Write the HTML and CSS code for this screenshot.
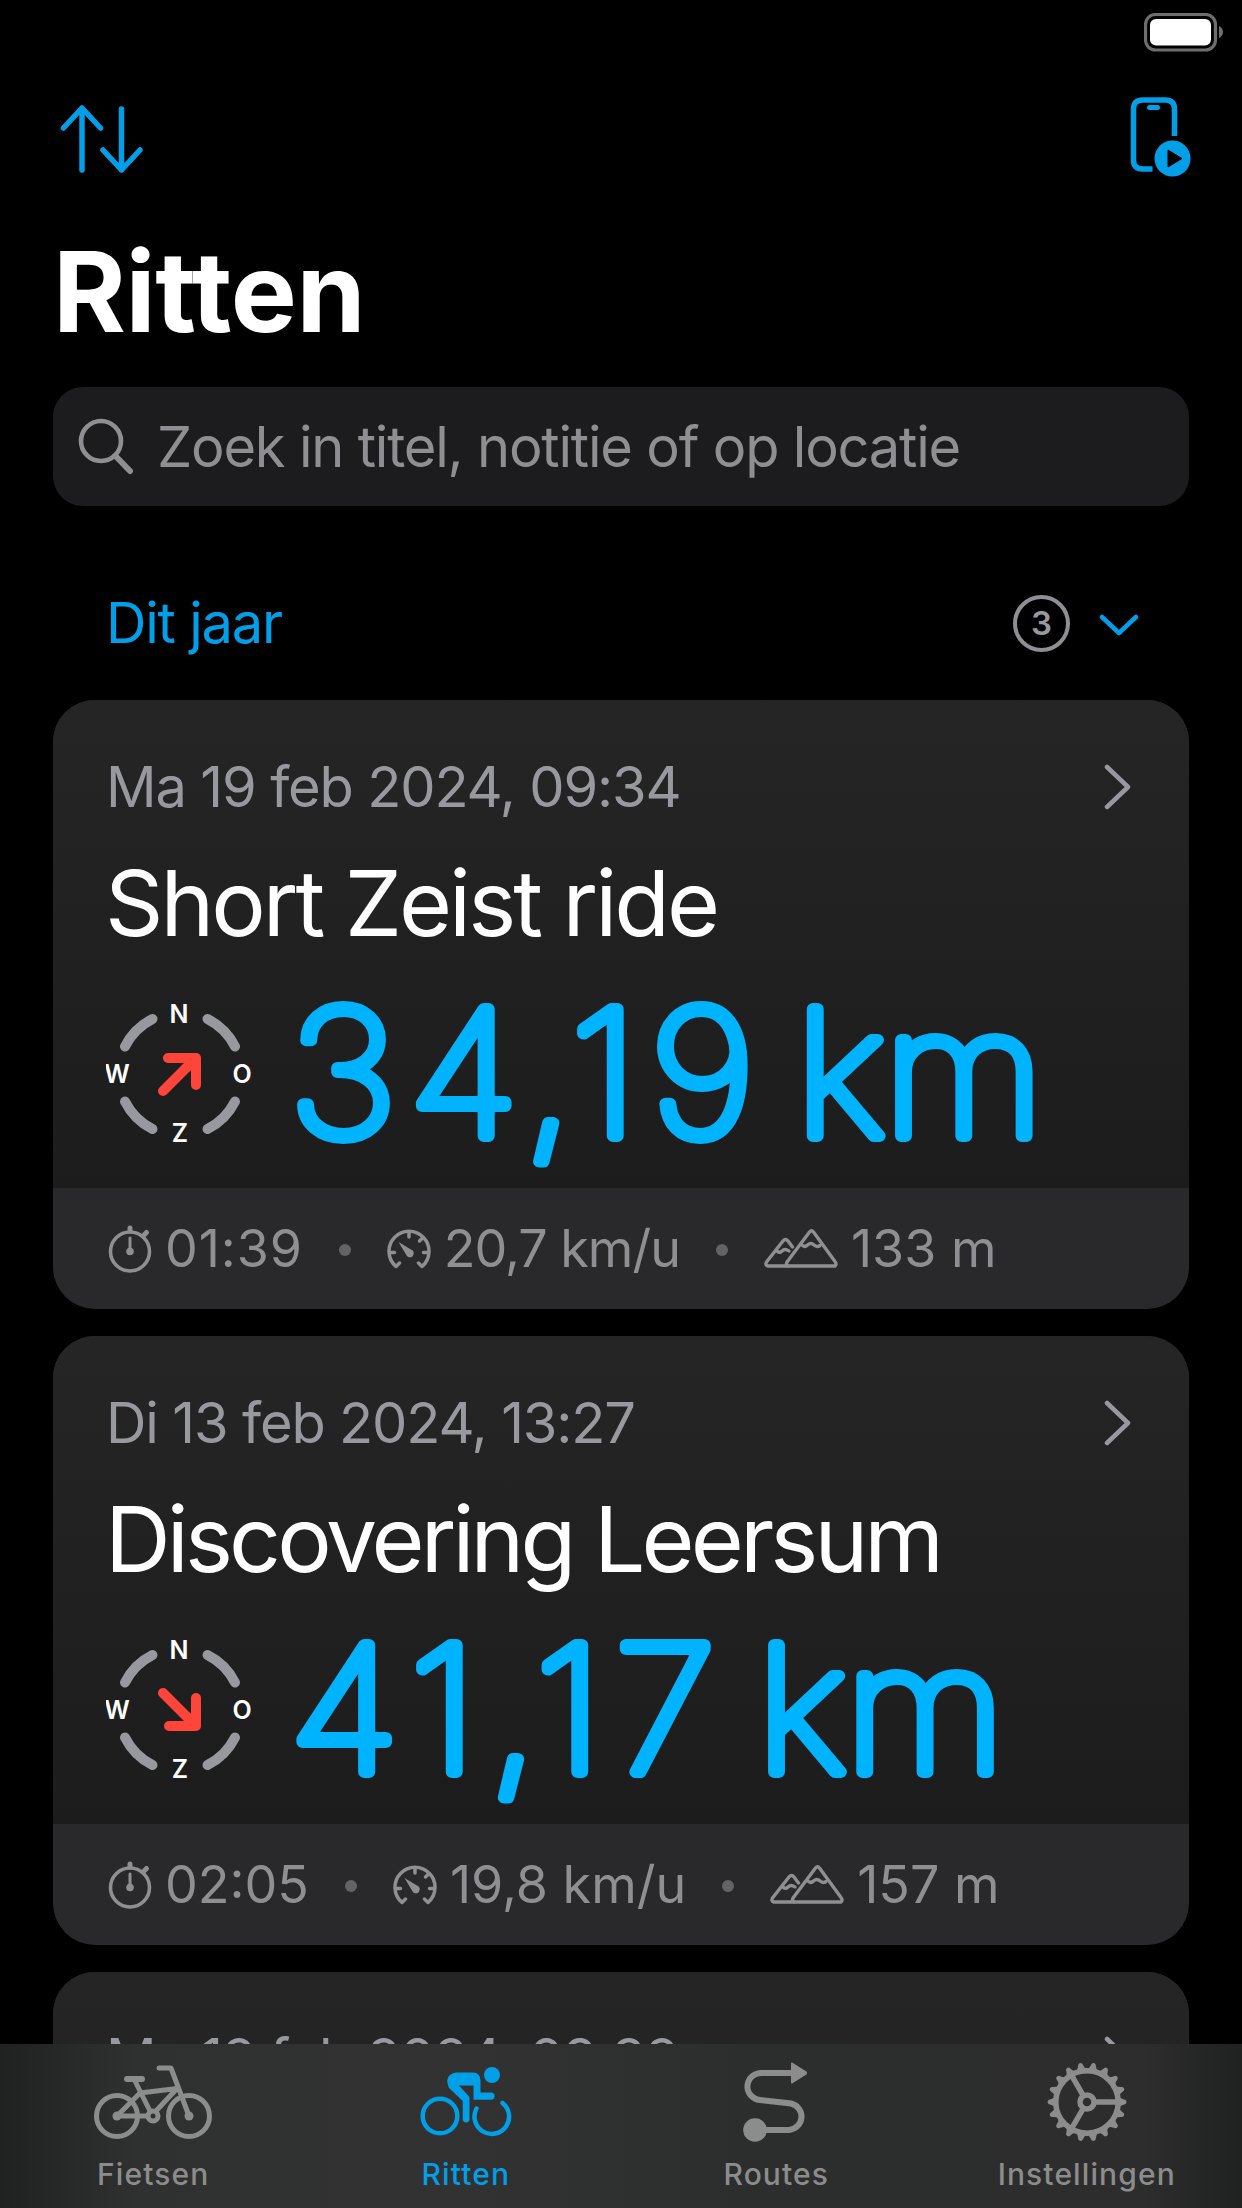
FILE: index.html
```html
<!DOCTYPE html>
<html lang="nl">
<head>
  <meta charset="UTF-8">
  <title>Ritten</title>
  <link rel="stylesheet" href="styles.css">
</head>

<body>

<!-- shared icons -->
<svg class="sprite" width="0" height="0">
  <symbol id="chevron" viewBox="0 0 28 48">
    <path d="M3 4 L24 24 L3 44" fill="none" stroke="currentColor" stroke-width="4.500" stroke-linecap="round" stroke-linejoin="round"/>
  </symbol>
  <symbol id="compass" viewBox="0 0 148 148">
    <g fill="none" stroke="#98989f" stroke-width="10" stroke-linecap="round">
      <path d="M19 46.500 A61.500 61.500 0 0 1 46.500 19"/>
      <path d="M101.500 19 A61.500 61.500 0 0 1 129 46.500"/>
      <path d="M129 101.500 A61.500 61.500 0 0 1 101.500 129"/>
      <path d="M46.500 129 A61.500 61.500 0 0 1 19 101.500"/>
    </g>
    <g class="compassText">
      <text x="73" y="23">N</text>
      <text x="136" y="83">O</text>
      <text x="74" y="142">Z</text>
      <text x="11" y="83">W</text>
    </g>
  </symbol>
  <symbol id="arrow" viewBox="0 0 48 48">
    <path d="M7 41 L40 8 M12 8 H40 V35" fill="none" stroke="#ff453a" stroke-width="10" stroke-linecap="round" stroke-linejoin="round"/>
  </symbol>
  <symbol id="stopwatch" viewBox="0 0 44 48">
    <g fill="none" stroke="currentColor" stroke-width="3.600" stroke-linecap="round">
      <circle cx="22" cy="26.500" r="19.500"/>
      <path d="M22 3 V6 M36.500 9.500 L38.500 7.500" stroke-width="5"/>
      <path d="M22 13 V26" stroke-width="3"/>
    </g>
    <circle cx="22" cy="26.500" r="3.800" fill="currentColor"/>
  </symbol>
  <symbol id="gauge" viewBox="0 0 44 40">
    <g fill="none" stroke="currentColor" stroke-width="3.500" stroke-linecap="round" stroke-linejoin="round">
      <path d="M12.500 34 L9 37.500 A20 20 0 1 1 35 37.500 L31.500 34"/>
      <path d="M22 3 V8 M35.500 9 L32.500 12 M3 23.500 H7.500 M41 23.500 H36.500"/>
    </g>
    <path d="M11.500 13 L24 20.500 A4 4 0 1 1 19 25.500 Z" fill="currentColor"/>
  </symbol>
  <symbol id="mountains" viewBox="0 0 74 42">
    <g fill="none" stroke="currentColor" stroke-width="3.400" stroke-linecap="round" stroke-linejoin="round">
      <path d="M24 38 H71 Q73 36 71 33.500 L49.500 4 Q47.500 1.500 45.500 4 L23 34 Q21.500 37 24 38"/>
      <path d="M24 38 H3.500 Q1 37 2.500 34 L19 13 Q21.500 10 24 13 L28.500 19"/>
      <path d="M38.500 17.500 Q41 19.500 43.500 17 Q47 14 50 17 Q53 19.500 56 17.500"/>
      <path d="M13 23 Q15.500 25.500 18 23 Q21 20 25 23"/>
    </g>
  </symbol>
</svg>

<div id="statusBar">
  <svg width="80" height="39" viewBox="0 0 80 39">
    <rect x="1.500" y="1.500" width="70" height="35.500" rx="10" fill="none" stroke="#6e6e6e" stroke-width="3.200"/>
    <rect x="6" y="6" width="61" height="26.500" rx="6" fill="#fff"/>
    <path d="M75 13 Q79 15 79 19 Q79 23 75 25 Z" fill="#6e6e6e"/>
  </svg>
</div>

<div id="navBar">
  <svg width="84" height="76" viewBox="0 0 84 76">
    <g fill="none" stroke="#009fe8" stroke-width="5.500" stroke-linecap="round" stroke-linejoin="round">
      <path d="M23 73 V12 M4.500 31 L23 11 L41.500 31"/>
      <path d="M62.500 12 V73 M44 53 L62.500 73 L81 53"/>
    </g>
  </svg>
  <svg width="62" height="80" viewBox="0 0 62 80">
    <path d="M44.500 39 V12 Q44.500 3 35.500 3 H12.500 Q3.500 3 3.500 12 V63 Q3.500 72 12.500 72 H22.500" fill="none" stroke="#009fe8" stroke-width="5.500"/>
    <path d="M19.500 10.500 H27.500" stroke="#009fe8" stroke-width="5" stroke-linecap="round"/>
    <circle cx="42.500" cy="61.500" r="18" fill="#009fe8"/>
    <path d="M38 53 L52 61.500 L38 70 Z" fill="#000" stroke="#000" stroke-linejoin="round"/>
  </svg>
</div>

<h1>Ritten</h1>

<div id="searchBar">
  <svg width="56" height="58" viewBox="0 0 56 58">
    <circle cx="23" cy="23" r="20" fill="none" stroke="#8e8e93" stroke-width="4.600"/>
    <path d="M37.500 38 L52 53" stroke="#8e8e93" stroke-width="6" stroke-linecap="round"/>
  </svg>
  <span>Zoek in titel, notitie of op locatie</span>
</div>

<div id="sectionHeader">
  <span class="sectionTitle">Dit jaar</span>
  <span class="count">3</span>
  <svg width="40" height="24" viewBox="0 0 40 24">
    <path d="M3 5 L20 21 L37 5" fill="none" stroke="#009fe8" stroke-width="4.500" stroke-linecap="round" stroke-linejoin="round"/>
  </svg>
</div>

<div id="rides">
  <div class="card">
    <div class="cardBody">
      <div class="dateRow">
        <span class="date">Ma 19 feb 2024, 09:34</span>
        <svg width="28" height="48"><use href="#chevron"/></svg>
      </div>
      <div class="rideTitle">Short Zeist ride</div>
      <div class="distanceRow">
        <div class="compass">
          <svg width="148" height="148"><use href="#compass"/></svg>
          <svg class="wind" width="48" height="48"><use href="#arrow"/></svg>
        </div>
        <svg class="distance" width="860" height="180"><text y="154" transform="scale(1.06 1)">34,19 <tspan class="unit">km</tspan></text></svg>
      </div>
    </div>
    <div class="stats">
      <svg width="44" height="48"><use href="#stopwatch"/></svg>
      <span class="time">01:39</span>
      <i class="dot"></i>
      <svg width="44" height="40"><use href="#gauge"/></svg>
      <span class="speed">20,7 km/u</span>
      <i class="dot"></i>
      <svg width="74" height="42"><use href="#mountains"/></svg>
      <span class="climb">133 m</span>
    </div>
  </div>

  <div class="card">
    <div class="cardBody">
      <div class="dateRow">
        <span class="date">Di 13 feb 2024, 13:27</span>
        <svg width="28" height="48"><use href="#chevron"/></svg>
      </div>
      <div class="rideTitle longTitle">Discovering Leersum</div>
      <div class="distanceRow">
        <div class="compass">
          <svg width="148" height="148"><use href="#compass"/></svg>
          <svg class="wind southEast" width="48" height="48"><use href="#arrow"/></svg>
        </div>
        <svg class="distance" width="860" height="180"><text y="154" transform="scale(1.06 1)">41,17 <tspan class="unit">km</tspan></text></svg>
      </div>
    </div>
    <div class="stats">
      <svg width="44" height="48"><use href="#stopwatch"/></svg>
      <span class="time">02:05</span>
      <i class="dot"></i>
      <svg width="44" height="40"><use href="#gauge"/></svg>
      <span class="speed">19,8 km/u</span>
      <i class="dot"></i>
      <svg width="74" height="42"><use href="#mountains"/></svg>
      <span class="climb">157 m</span>
    </div>
  </div>

  <div class="card">
    <div class="cardBody">
      <div class="dateRow">
        <span class="date">Ma 12 feb 2024, 09:32</span>
        <svg width="28" height="48"><use href="#chevron"/></svg>
      </div>
    </div>
  </div>
</div>

<div id="tabBar">
  <div class="tab">
    <svg width="120" height="90" viewBox="0 0 120 90">
      <g fill="none" stroke="currentColor" stroke-width="5" stroke-linecap="round" stroke-linejoin="round">
        <circle cx="24" cy="56" r="20.500"/>
        <circle cx="96" cy="56" r="20.500"/>
        <circle cx="60" cy="56" r="5"/>
        <path d="M66 8 H78 L96 56"/>
        <path d="M34 19 H49" stroke-width="6"/>
        <path d="M41 19 L57 51 M24 56 H54 M24 56 L47 33 L84 28.500 L63 51"/>
      </g>
      <g fill="currentColor">
        <circle cx="24" cy="56" r="4.500"/>
        <circle cx="96" cy="56" r="4.500"/>
      </g>
    </svg>
    <span>Fietsen</span>
  </div>
  <div class="tab active">
    <svg width="92" height="90" viewBox="0 0 92 90">
      <g fill="none" stroke="currentColor" stroke-width="4.500" stroke-linecap="round">
        <circle cx="20" cy="56" r="17.300"/>
        <path d="M56.500 48.500 A17.300 17.300 0 1 0 82.500 43"/>
      </g>
      <g fill="currentColor">
        <circle cx="72" cy="15" r="8"/>
        <path d="M36 12.500 H53 Q60.500 12.500 60.500 21 V32.500 H71 A3.600 3.600 0 0 1 71 39.700 H53.500 V25.500 H39 L49.500 37 V59 A3.400 3.400 0 0 1 42.700 59 V41 L29 28 Q23.500 15 36 12.500 Z"/>
      </g>
    </svg>
    <span>Ritten</span>
  </div>
  <div class="tab">
    <svg width="66" height="90" viewBox="0 0 66 90">
      <path d="M12 70 H46 A14 13.500 0 0 0 48 43.500 L17 40 A14 13.500 0 0 1 20 13 H48" fill="none" stroke="currentColor" stroke-width="6"/>
      <circle cx="12" cy="70" r="11.800" fill="currentColor"/>
      <path d="M49 3.500 L62.500 12 Q63.500 13 62.500 14 L49 22.500 Z" fill="currentColor" stroke="currentColor" stroke-width="2" stroke-linejoin="round"/>
    </svg>
    <span>Routes</span>
  </div>
  <div class="tab">
    <svg width="84" height="90" viewBox="-42 -42 84 90">
      <defs>
        <path id="tooth" d="M32 -5 Q35 -3 38.500 -2 Q40.500 0 38.500 2 Q35 3 32 5 Z" fill="currentColor"/>
        <g id="teeth">
          <use href="#tooth"/>
          <use href="#tooth" transform="rotate(20)"/>
          <use href="#tooth" transform="rotate(40)"/>
          <use href="#tooth" transform="rotate(60)"/>
          <use href="#tooth" transform="rotate(80)"/>
          <use href="#tooth" transform="rotate(100)"/>
        </g>
      </defs>
      <use href="#teeth"/>
      <use href="#teeth" transform="rotate(120)"/>
      <use href="#teeth" transform="rotate(240)"/>
      <g fill="none" stroke="currentColor" stroke-width="5.500">
        <circle r="31.200"/>
        <circle r="7"/>
        <path d="M8 0 H30"/>
        <path d="M8 0 H30" transform="rotate(120)"/>
        <path d="M8 0 H30" transform="rotate(240)"/>
      </g>
    </svg>
    <span>Instellingen</span>
  </div>
</div>

</body>

</html>
```
FILE: styles.css
```css
* {
  box-sizing: border-box;
}

body {
  margin: 0;
  width: 1242px;
  height: 2208px;
  overflow: hidden;
  background-color: #000;
  color: #fff;
  font-family: Inter, "Liberation Sans", sans-serif;
}

svg {
  display: block;
  flex: none;
}

.sprite {
  position: absolute;
}

#statusBar {
  display: flex;
  justify-content: flex-end;
  height: 96px;
  padding: 13px 18px 0 0;
}

#navBar {
  display: flex;
  justify-content: space-between;
  align-items: flex-start;
  height: 134px;
  padding: 1px 50px 0 59px;
}

h1 {
  margin: 0;
  height: 157px;
  padding-left: 53px;
  font-size: 111px;
  line-height: 123px;
  font-weight: 700;
  letter-spacing: -0.4px;
}

#searchBar {
  display: flex;
  align-items: center;
  gap: 23px;
  height: 119px;
  margin: 0 53px;
  padding-left: 25px;
  border-radius: 30px;
  background-color: #1c1c1e;
  color: #8e8e93;
  font-size: 56px;
  letter-spacing: -1.2px;
}

#sectionHeader {
  display: flex;
  align-items: center;
  height: 194px;
  padding: 41px 103px 0 106px;
}

.sectionTitle {
  flex: 1;
  padding-bottom: 2px;
  color: #009fe8;
  font-size: 56px;
  letter-spacing: -1.2px;
}

.count {
  width: 57px;
  height: 57px;
  margin-right: 29px;
  border: 4px solid #8e8e93;
  border-radius: 50%;
  color: #98989f;
  font-size: 33px;
  font-weight: 600;
  line-height: 49px;
  text-align: center;
}

#rides {
  display: flex;
  flex-direction: column;
  gap: 27px;
  height: 1508px;
  padding: 0 53px;
  overflow: hidden;
}

.card {
  flex: none;
  height: 609px;
  border-radius: 42px;
  overflow: hidden;
  background-color: #29292b;
}

.cardBody {
  height: 488px;
  padding: 50px 57px 0 53px;
  background: linear-gradient(#252525, #1c1c1c);
}

.dateRow {
  display: flex;
  justify-content: space-between;
  align-items: center;
  height: 74px;
  color: #98989f;
}

.date {
  font-size: 56px;
  letter-spacing: -1.15px;
}

.rideTitle {
  height: 158px;
  margin-left: -1px;
  line-height: 158px;
  font-size: 91px;
  letter-spacing: -3px;
}

.longTitle {
  letter-spacing: -3.9px;
}

.distanceRow {
  display: flex;
}

.compass {
  display: grid;
  place-items: center;
  width: 148px;
  height: 148px;
  margin: 18px 0 0;
}

.compass svg {
  grid-area: 1 / 1;
}

.compassText {
  fill: #fff;
  font-size: 25px;
  font-weight: 600;
  text-anchor: middle;
}

.southEast {
  transform: rotate(90deg);
}

.distance {
  margin-left: 35px;
  overflow: visible;
}

.distance text {
  font-size: 175px;
  font-weight: 100;
  letter-spacing: 11px;
  word-spacing: -33px;
  fill: #00b3ff;
  stroke: #00b3ff;
  stroke-width: 12px;
  stroke-linejoin: round;
}

.distance .unit {
  letter-spacing: -2px;
}

.stats {
  display: flex;
  align-items: center;
  height: 121px;
  padding: 0 0 0 55px;
  color: #8e8e93;
  font-size: 52px;
}

.time, .speed, .climb {
  margin-left: 13px;
}

.card:first-child .time {
  letter-spacing: 0.9px;
}

.card:first-child .speed {
  letter-spacing: -1px;
}

.dot {
  width: 12px;
  height: 12px;
  margin: 3px 36px 0;
  border-radius: 50%;
  background-color: #636366;
}

#tabBar {
  position: fixed;
  left: 0;
  bottom: 0;
  display: flex;
  width: 1242px;
  height: 164px;
  background: linear-gradient(90deg, #202221, #2f3030 11%, #323232 35%, #2c2e2d 60%, #2c2d2c 92%, #202121);
  color: #8c8c8c;
}

.tab {
  width: 25%;
  display: flex;
  flex-direction: column;
  align-items: center;
  padding-top: 16px;
  font-size: 30px;
  font-weight: 500;
  letter-spacing: 1.1px;
}

.tab:first-child {
  padding-right: 4px;
}

.tab span {
  margin-top: 6px;
}

.active {
  color: #009fe8;
}
```
